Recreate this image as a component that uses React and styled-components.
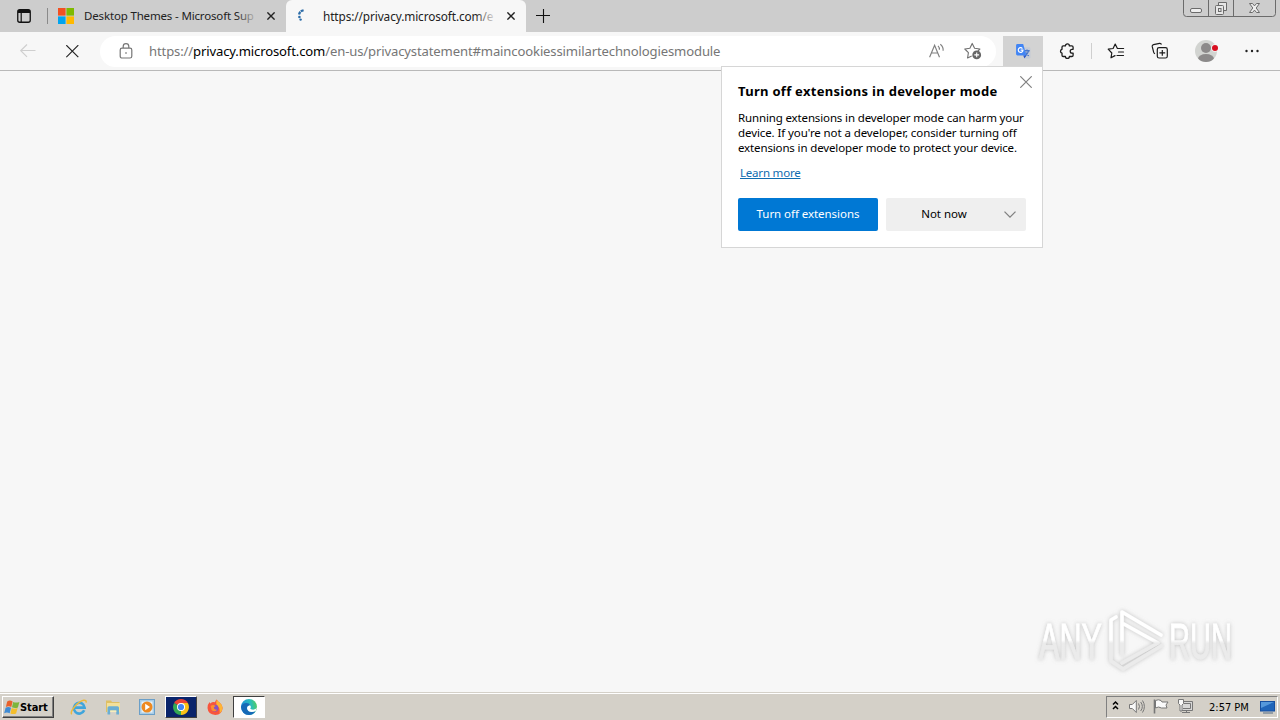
import styled, { createGlobalStyle } from "styled-components";

export default function App() {
  return (
    <Screen>
      <GlobalStyle />
      <TabStrip>
        <TabActions><PanelIcon /></TabActions>
        <Tab $width={238}>
          <MicrosoftLogo />
          <TabTitle $left={10} $fade="#cdcdcd" $size={11.5} $spacing={-0.16}>Desktop Themes - Microsoft Sup</TabTitle>
          <TabClose />
        </Tab>
        <Tab $width={240} $active>
          <Spinner />
          <TabTitle $left={11} $fade="#f7f7f7" $size={11.8} $spacing={-0.1}>https://privacy.microsoft.com/e</TabTitle>
          <TabClose />
        </Tab>
        <NewTab><PlusIcon /></NewTab>
        <WindowControls />
      </TabStrip>
      <Toolbar>
        <ToolButton $width={56}><BackIcon /></ToolButton>
        <ToolButton $width={32}><StopIcon /></ToolButton>
        <AddressBar>
          <LockIcon />
          <Url>https://<b>privacy.microsoft.com</b>/en-us/privacystatement#maincookiessimilartechnologiesmodule</Url>
          <AddressIcons>
            <ReadAloudIcon />
            <StarAddIcon />
          </AddressIcons>
        </AddressBar>
        <ToolButton $width={40} $pressed><TranslateIcon /></ToolButton>
        <ToolButton $width={48}><PuzzleIcon /></ToolButton>
        <Divider />
        <ToolButton $width={48}><FavoritesIcon /></ToolButton>
        <ToolButton $width={40}><CollectionsIcon /></ToolButton>
        <ToolButton $width={52}><Avatar /></ToolButton>
        <ToolButton $width={40}><DotsIcon /></ToolButton>
      </Toolbar>
      <Page>
        <Watermark />
      </Page>
      <Taskbar>
        <StartButton><WindowsFlag />Start</StartButton>
        <QuickLaunch>
          <TaskItem><ExplorerIcon /></TaskItem>
          <TaskItem><FolderIcon /></TaskItem>
          <TaskItem><PlayerIcon /></TaskItem>
          <TaskItem $look="selected"><ChromeIcon /></TaskItem>
          <TaskItem><FirefoxIcon /></TaskItem>
          <TaskItem $look="pressed"><EdgeIcon /></TaskItem>
        </QuickLaunch>
        <Tray>
          <TrayIcons />
          <Clock>2:57 PM</Clock>
          <MonitorIcon />
        </Tray>
      </Taskbar>
      <Popup>
        <PopupClose><CloseThin /></PopupClose>
        <PopupTitle>Turn off extensions in developer mode</PopupTitle>
        <PopupText>
          <Line $spacing={-0.14}>Running extensions in developer mode can harm your</Line>
          <Line $spacing={-0.09}>device. If you're not a developer, consider turning off</Line>
          <Line $spacing={-0.14}>extensions in developer mode to protect your device.</Line>
        </PopupText>
        <LearnMore>Learn more</LearnMore>
        <Buttons>
          <PrimaryButton>Turn off extensions</PrimaryButton>
          <SecondaryButton><span>Not now</span><Chevron /></SecondaryButton>
        </Buttons>
      </Popup>
    </Screen>
  );
}

function PanelIcon() {
  return (
    <svg width="16" height="16" viewBox="0 0 16 16">
      <rect x="1.75" y="1.75" width="12.5" height="12.5" rx="2" fill="none" stroke="#111" strokeWidth="1.3" />
      <path d="M2 2h12v3H2zM4.6 5h1.2v9H4.6z" fill="#111" />
    </svg>
  );
}

function MicrosoftLogo() {
  return (
    <svg width="16" height="16" viewBox="0 0 16 16">
      <path fill="#f25022" d="M0 0h7.6v7.6H0z" />
      <path fill="#7fba00" d="M8.4 0H16v7.6H8.4z" />
      <path fill="#00a4ef" d="M0 8.4h7.6V16H0z" />
      <path fill="#ffb900" d="M8.4 8.4H16V16H8.4z" />
    </svg>
  );
}

function TabClose() {
  return (
    <svg width="8" height="8" viewBox="0 0 8 8">
      <path d="M.4 .4l7.2 7.2M7.6 .4l-7.2 7.2" stroke="#222" strokeWidth="1.4" />
    </svg>
  );
}

function Spinner() {
  return (
    <svg width="16" height="16" viewBox="0 0 16 16">
      <path d="M7.6 2.2Q3.6 3.2 3 6.6" fill="none" stroke="#2b6ca8" strokeWidth="2.2" strokeDasharray="3 .6" />
      <circle cx="3.4" cy="9" r="1.3" fill="#2b6ca8" />
      <circle cx="4.6" cy="11.6" r="1.2" fill="#2b6ca8" />
    </svg>
  );
}

function PlusIcon() {
  return (
    <svg width="14" height="14" viewBox="0 0 14 14">
      <path d="M7.5 0v14M0 6.5h14" stroke="#111" strokeWidth="1.1" />
    </svg>
  );
}

function WindowControls() {
  return (
    <Controls>
      <svg width="94" height="18" viewBox="0 0 94 18" fill="none" stroke="#6b6b6b">
        <path d="M.5 0v13.5q0 3 3 3h86q3 0 3-3V0M25.5 0v16M50.5 0v16" />
        <rect x="7.5" y="8.5" width="11" height="4" rx="1.5" fill="#eee" />
        <path d="M35.5 5V2.5h8v8h-3" fill="#e6e6e6" />
        <rect x="32.5" y="5.5" width="8" height="9" rx="1" fill="#e6e6e6" />
        <rect x="35.5" y="8.5" width="2.5" height="3" />
        <path d="M66.5 3.5h3l2 2.4 2-2.4h3l-3.3 4.5 3.3 4.5h-3l-2-2.4-2 2.4h-3l3.3-4.5z" fill="#eee" />
      </svg>
    </Controls>
  );
}

function BackIcon() {
  return (
    <svg width="16" height="14" viewBox="0 0 16 14" fill="none" stroke="#cfcfcf" strokeWidth="1.2">
      <path d="M15.5 6.5H1M7 .5L.8 6.6 7 12.8" />
    </svg>
  );
}

function StopIcon() {
  return (
    <svg width="13" height="13" viewBox="0 0 13 13">
      <path d="M.3 .2l12 12M12.3 .2l-12 12" stroke="#222" strokeWidth="1.2" />
    </svg>
  );
}

function LockIcon() {
  return (
    <svg width="14" height="16" viewBox="0 0 14 16" fill="none" stroke="#767676" strokeWidth="1.2">
      <rect x="1.2" y="5.2" width="11.6" height="9.8" rx="1.8" />
      <path d="M4.2 5V3.4a2.8 2.8 0 0 1 5.6 0V5" />
      <path d="M6.3 9.3h1.4v1.4H6.3z" fill="#767676" stroke="none" />
    </svg>
  );
}

function ReadAloudIcon() {
  return (
    <svg width="16" height="16" viewBox="0 0 16 16" fill="none" stroke="#808080" strokeWidth="1.15">
      <path d="M.6 14.2L5.6 2.2l4.9 12M2.4 10h6.4M9 2.8q1.6 1.6 1.4 4M11.3 1.2q3.3 2.6 2.8 6.6" />
    </svg>
  );
}

function StarAddIcon() {
  return (
    <svg width="18" height="18" viewBox="0 0 18 18" fill="none" stroke="#707070" strokeWidth="1.1" strokeLinejoin="round">
      <path d="M7.7 14L3.6 16l.8-5.3L.8 7l5.1-.8L8.2 1.4l2.4 4.8 5.3.8-2 2" />
      <circle cx="12.7" cy="12.9" r="4.4" fill="#666" stroke="none" />
      <path d="M12.7 10.5v4.8M10.3 12.9h4.8" stroke="#fff" />
    </svg>
  );
}

function TranslateIcon() {
  return (
    <svg width="17" height="17" viewBox="0 0 16 16">
      <path d="M7 4h6.2q1.3 0 1.3 1.3v8.2q0 1.3-1.3 1.3H9.6z" fill="#c5cbd6" />
      <path d="M9 7.3h4.8M11.3 6v1.3M12.8 7.4q-.8 3-3.3 4.8M10 8.7q1 2 3 3.3" stroke="#4a78cc" fill="none" strokeWidth="1.2" />
      <path d="M2.3 1h5.4l3 10.7H2.3Q1 11.7 1 10.4V2.3Q1 1 2.3 1z" fill="#4285f4" />
      <path d="M7.8 11.7h3l-2 3z" fill="#2a56c6" />
      <path d="M7 5.2a2.2 2.2 0 1 0 .5 1.5H5.3" fill="none" stroke="#fff" strokeWidth="1.1" />
    </svg>
  );
}

function PuzzleIcon() {
  return (
    <svg width="16" height="16" viewBox="0 0 16 16" fill="none" stroke="#1c1c1c" strokeWidth="1.3" strokeLinejoin="round">
      <path d="M4.2 2.9h2.2a2 2 0 0 1 4 0h2.4q1.3 0 1.3 1.3v2.1h-1a1.9 1.9 0 0 0 0 3.8h1v2.1q0 1.3-1.3 1.3h-2.4a2 2 0 0 1-4 0H4.2q-1.2 0-1.2-1.3v-2.1a1.95 1.95 0 0 1 0-3.8V4.2q0-1.3 1.2-1.3z" />
    </svg>
  );
}

function FavoritesIcon() {
  return (
    <svg width="18" height="16" viewBox="0 0 18 16" fill="none" stroke="#1c1c1c" strokeWidth="1.2" strokeLinejoin="round" strokeLinecap="round">
      <path d="M8 12.6L4 14.8l.8-4.8L1.2 6.2l4.9-.7L8.2 1l2.2 4.5h6.2M11.5 9h5M10 12.5h6.5" />
    </svg>
  );
}

function CollectionsIcon() {
  return (
    <svg width="18" height="18" viewBox="0 0 18 18" fill="none" stroke="#1c1c1c" strokeWidth="1.2" strokeLinejoin="round">
      <path d="M4 11.8q-1-.4-1.3-1.4L1.2 4.4Q1 3 2.5 2.6L8.6 1.3q1.4-.2 1.9 1.2" />
      <rect x="6.3" y="5.7" width="10" height="10.3" rx="1.8" />
      <path d="M11.3 8v5.8M8.4 10.9h5.8" />
    </svg>
  );
}

function Avatar() {
  return (
    <svg width="26" height="22" viewBox="0 0 26 22">
      <clipPath id="face"><circle cx="13" cy="11" r="11" /></clipPath>
      <g clipPath="url(#face)">
        <path d="M0 0h26v22H0z" fill="#d2d4d1" />
        <circle cx="13" cy="8" r="5" fill="#8c8a8a" />
        <ellipse cx="13" cy="19" rx="8" ry="5" fill="#8c8a8a" />
      </g>
      <circle cx="22" cy="8" r="3.8" fill="#f7f7f7" />
      <circle cx="22" cy="8" r="3" fill="#d80f20" />
    </svg>
  );
}

function DotsIcon() {
  return (
    <svg width="14" height="4" viewBox="0 0 14 4" fill="#222">
      <circle cx="1.5" cy="2" r="1.2" />
      <circle cx="7" cy="2" r="1.2" />
      <circle cx="12.5" cy="2" r="1.2" />
    </svg>
  );
}

function CloseThin() {
  return (
    <svg width="12" height="12" viewBox="0 0 12 12">
      <path d="M.3 .3l11.4 11.4M11.7 .3L.3 11.7" stroke="#808080" strokeWidth="1.2" />
    </svg>
  );
}

function Chevron() {
  return (
    <svg width="12" height="7" viewBox="0 0 12 7">
      <path d="M.5 .6L6 6.1 11.5 .6" stroke="#808080" strokeWidth="1.3" fill="none" />
    </svg>
  );
}

function Watermark() {
  return (
    <Mark width="220" height="80" viewBox="0 0 220 80">
      <defs>
        <linearGradient id="fade" x1="0" y1="0" x2="0" y2="80" gradientUnits="userSpaceOnUse">
          <stop offset=".5" stopColor="#fff" />
          <stop offset=".54" stopColor="#ebebeb" />
        </linearGradient>
        <filter id="glow" x="-10%" y="-15%" width="120%" height="130%">
          <feDropShadow dx="0" dy="0" stdDeviation="2" floodColor="#888" floodOpacity=".5" />
        </filter>
      </defs>
      <g filter="url(#glow)" fill="url(#fade)" stroke="url(#fade)" strokeWidth=".8">
        <text x="14" y="59" fontSize="50" textLength="63" lengthAdjust="spacingAndGlyphs">ANY</text>
        <text x="144" y="59" fontSize="50" textLength="63" lengthAdjust="spacingAndGlyphs">RUN</text>
        <g fill="none" strokeWidth="3.6" strokeLinejoin="round" strokeLinecap="round">
          <path d="M97 54V12l39 23M97 23l36 20-36 20" />
          <path d="M91 17l-5 3v41l12 8 38-23" />
        </g>
      </g>
    </Mark>
  );
}

function WindowsFlag() {
  return (
    <svg width="16" height="15" viewBox="0 0 16 15">
      <path d="M3.2 1.4q2.7-1.6 5.4 0L7.3 6.9q-2.6-1.3-5.4 0z" fill="#e8612c" />
      <path d="M9.2 1.9q2.8 1.2 6.2 0l-1.5 5.5q-3 1.1-5.9-.2z" fill="#7db53c" />
      <path d="M1.6 7.7q2.7-1.4 5.4 0l-1.3 5.5q-2.8-1.3-5.5 0z" fill="#3f8bd4" />
      <path d="M7.7 8.1q2.8 1.2 5.9 0l-1.5 5.5q-2.9 1.1-5.7-.2z" fill="#f4be2c" />
    </svg>
  );
}

function ExplorerIcon() {
  return (
    <svg width="18" height="17" viewBox="0 0 18 17" fill="none">
      <path d="M14.2 11.3A5.4 5.4 0 1 1 14.6 8.6H5" stroke="#3fa5dc" strokeWidth="2.6" />
      <path d="M1.8 15.3C-.5 13 7 3 13.5 1.3q3-.5 2.6 2.3" stroke="#ecb93d" strokeWidth="1.5" />
    </svg>
  );
}

function FolderIcon() {
  return (
    <svg width="16" height="16" viewBox="0 0 16 16">
      <path d="M1 1.5h5l1 1.5h7.5v10H1z" fill="#dfc064" />
      <path d="M2 4h13v9H2z" fill="#f3e09a" />
      <path d="M2.5 8.8q0-1.5 1.5-1.5h8.5q1.5 0 1.5 1.5V15.5h-2.7v-4H5.2v4H2.5z" fill="#6baed3" />
      <path d="M5.2 11.5h6.1v1.6H5.2z" fill="#f7edbd" />
    </svg>
  );
}

function PlayerIcon() {
  return (
    <svg width="16" height="16" viewBox="0 0 16 16">
      <rect x=".5" y=".5" width="15" height="15" fill="#a9cde7" stroke="#6b9fc8" />
      <path d="M2.5 2.5h11v11h-11z" fill="#e9f2f8" />
      <circle cx="8" cy="8" r="5.5" fill="#ee8921" />
      <path d="M6.2 4.8L11 8l-4.8 3.2z" fill="#fff" />
    </svg>
  );
}

function ChromeIcon() {
  return (
    <svg width="16" height="16" viewBox="0 0 16 16">
      <path d="M8 8L1.1 4A8 8 0 0 1 14.9 4z" fill="#ea4335" />
      <path d="M8 8L14.9 4A8 8 0 0 1 8 16z" fill="#fbc116" />
      <path d="M8 8v8A8 8 0 0 1 1.1 4z" fill="#34a853" />
      <path d="M8 4h6.9L11.5 10z" fill="#fbc116" />
      <circle cx="8" cy="8" r="4" fill="#fff" />
      <circle cx="8" cy="8" r="3.1" fill="#4285f4" />
    </svg>
  );
}

function FirefoxIcon() {
  return (
    <svg width="16" height="16" viewBox="0 0 16 16">
      <path d="M.5 9Q.4 5.5 2.6 3l.6 1.4Q5.5 2.6 8 3.2 8.2 1.3 9.8.4q.8 2 3 3.3 2.8 2.2 2.8 5.2-.4 6.6-7.4 7Q1 15.5.5 9z" fill="#f8553c" />
      <path d="M9.8.4q.8 2 3 3.3 2.8 2.2 2.8 5.2-.3 3.6-3 5.5.6-5.4-2-7.4Q8.4 5.4 9.800 .4z" fill="#ffb534" />
      <circle cx="8" cy="9.2" r="3.4" fill="#8553c4" />
      <path d="M3.7 7Q6 5.2 8.7 7L6.8 8.3Q7 11 10.2 10.8 7.5 13.8 4.5 11z" fill="#ff8f2e" />
    </svg>
  );
}

function EdgeIcon() {
  return (
    <svg width="16" height="16" viewBox="0 0 16 16">
      <defs>
        <linearGradient id="edge" x1="0" y1=".3" x2="1" y2=".1">
          <stop offset="0" stopColor="#1d91dc" />
          <stop offset=".6" stopColor="#2bbfb9" />
          <stop offset="1" stopColor="#58ce55" />
        </linearGradient>
      </defs>
      <circle cx="8" cy="8" r="8" fill="url(#edge)" />
      <path d="M0 8q1-4 5.5-4Q8.5 4 9 6.3 6 7 6 9.3q.5 3.7 4.8 3.7 2 0 3.8-1.1Q12.2 16 8 16 1 15.7 0 8z" fill="#1669b7" />
      <path d="M9 6.3Q10.7 8 9.2 9.6q.4 1.1 2.9 1.2 2.8-.3 3.9-2.6l-1.3 3.7Q12.8 13 10.800 13 6.4 13 6 9.3 6 7 9 6.3z" fill="#fff" />
    </svg>
  );
}

function TrayIcons() {
  return (
    <svg width="84" height="18" viewBox="0 0 84 18" fill="none" stroke="#777">
      <path d="M2 6.500l2.500-2.500 2.500 2.500M2 11l2.500-2.500L7 11" stroke="#000" strokeWidth="1.5" />
      <path d="M18.500 6.500h2.800l4-4v12l-4-4h-2.800z" fill="#f8f8f8" />
      <path d="M27.500 5.500q2 3 0 6M29.700 4q3.300 4.500 0 9M31.500 2.500q3.800 6 0 12" />
      <path d="M43.500 1.500v14" strokeWidth="1.6" />
      <path d="M44.500 2.500q3-1.500 5.500 0l1 1.500h6l-2 3 1 3h-5.500q-3-2-6 0z" fill="#fafafa" />
      <path d="M71.500 3.500h10v9h-12v-5" fill="#d7d7d7" />
      <path d="M73 5.500h6.500v5H72M71 14.500h8M75.500 12.500v2" />
      <path d="M67.500 1.500h5v4l-1.500 1.500v6h-2V7l-1.500-1.500z" fill="#f8f8f8" />
    </svg>
  );
}

function MonitorIcon() {
  return (
    <svg width="15" height="15" viewBox="0 0 15 15">
      <path d="M0 1h15v10.500H0z" fill="#174f9f" />
      <path d="M1 2h13v8.500H1z" fill="#2065b9" />
      <path d="M1 2h13L1 8z" fill="#5598db" />
      <path d="M3 12.500h10v1H3z" fill="#526a84" />
    </svg>
  );
}

const GlobalStyle = createGlobalStyle`
  * {
    box-sizing: border-box;
  }
  body {
    margin: 0;
    overflow: hidden;
    font-family: "Noto Sans", "Open Sans", sans-serif;
  }
  svg {
    display: block;
    flex: none;
  }
`

const Screen = styled.div`
  position: relative;
  width: 1280px;
  height: 720px;
  display: flex;
  flex-direction: column;
  background: #f7f7f7;
`

const TabStrip = styled.div`
  height: 32px;
  display: flex;
  align-items: flex-start;
  background: #cdcdcd;
`

const TabActions = styled.div`
  width: 48px;
  height: 16px;
  margin-top: 8px;
  padding-left: 16px;
  border-right: 1px solid #8a8a8a;
`

const Tab = styled.div`
  width: ${(props) => props.$width}px;
  height: 32px;
  display: flex;
  align-items: center;
  padding: 0 11px 0 10px;
  border-radius: 6px 6px 0 0;
  background: ${(props) => (props.$active ? "#f7f7f7" : "transparent")};
`

const TabTitle = styled.div`
  position: relative;
  width: 174px;
  margin-left: ${(props) => props.$left}px;
  margin-right: auto;
  white-space: nowrap;
  font-size: ${(props) => props.$size}px;
  line-height: 18px;
  letter-spacing: ${(props) => props.$spacing}px;
  color: #222;

  &:after {
    content: "";
    position: absolute;
    top: 0;
    right: 0;
    width: 22px;
    height: 100%;
    background: linear-gradient(to right, transparent, ${(props) => props.$fade});
  }
`

const NewTab = styled.div`
  padding: 9px 0 0 10px;
`

const Controls = styled.div`
  margin-left: auto;
  margin-right: 3px;
`

const Toolbar = styled.div`
  height: 39px;
  display: flex;
  align-items: center;
  border-bottom: 1px solid #b9b9b9;
  background: #f7f7f7;
`

const ToolButton = styled.div`
  width: ${(props) => props.$width}px;
  height: 30px;
  flex: none;
  display: flex;
  align-items: center;
  justify-content: center;
  background: ${(props) => (props.$pressed ? "#d3d3d3" : "transparent")};
`

const AddressBar = styled.div`
  width: 896px;
  height: 31px;
  margin: 0 7px 0 12px;
  padding: 0 14px 0 19px;
  display: flex;
  align-items: center;
  border-radius: 16px;
  background: #fff;
`

const Url = styled.div`
  margin-left: 16px;
  white-space: nowrap;
  font-size: 13.1px;
  letter-spacing: -0.14px;
  color: #767676;

  b {
    font-weight: 400;
    color: #000;
  }
`

const AddressIcons = styled.div`
  margin-left: auto;
  display: flex;
  align-items: center;
  gap: 19px;
`

const Divider = styled.div`
  width: 1px;
  height: 16px;
  background: #cfcfcf;
`

const Page = styled.div`
  flex: 1;
  display: flex;
  align-items: flex-end;
  justify-content: flex-end;
  padding: 0 35px 12px 0;
`

const Mark = styled.svg`
  font-family: "Liberation Sans Narrow", "Liberation Sans", sans-serif;
`

const Taskbar = styled.div`
  height: 28px;
  display: flex;
  align-items: center;
  padding: 1px 2px 0;
  border-top: 1px solid #d4d0c8;
  box-shadow: inset 0 1px #fff;
  background: #d4d0c8;
`

const StartButton = styled.div`
  width: 52px;
  height: 22px;
  display: flex;
  align-items: center;
  gap: 0;
  padding-left: 1px;
  border: 1px solid;
  border-color: #fff #404040 #404040 #fff;
  box-shadow: inset -1px -1px #808080;
  font: bold 11px "DejaVu Sans Condensed", "DejaVu Sans", sans-serif;
  letter-spacing: -0.1px;
  color: #000;
`

const QuickLaunch = styled.div`
  display: flex;
  gap: 2px;
  margin-left: 9px;
`

const taskLooks = {
  selected: "background: #0a246a; border: 1px solid; border-color: #fff #404040 #404040 #fff;",
  pressed: "background: #fff; border: 1px solid; border-color: #404040 #fff #fff #404040;",
};

const TaskItem = styled.div`
  width: 32px;
  height: 22px;
  display: flex;
  align-items: center;
  justify-content: center;
  ${(props) => taskLooks[props.$look]}
`

const Tray = styled.div`
  width: 172px;
  height: 22px;
  margin-left: auto;
  display: flex;
  align-items: center;
  padding: 0 2px 0 4px;
  border: 1px solid;
  border-color: #808080 #fff #fff #808080;
`

const Clock = styled.div`
  width: 41px;
  margin: 0 10px 0 14px;
  white-space: nowrap;
  font: 11px "DejaVu Sans Condensed", "DejaVu Sans", sans-serif;
  letter-spacing: 0;
  color: #000;
`

const Popup = styled.div`
  position: absolute;
  left: 721px;
  top: 66px;
  width: 322px;
  height: 182px;
  padding: 15px 16px 0;
  border: 1px solid #d6d6d6;
  background: #fff;
  color: #000;
`

const PopupClose = styled.div`
  position: absolute;
  top: 9px;
  right: 10px;
`

const PopupTitle = styled.div`
  white-space: nowrap;
  font-size: 13px;
  line-height: 18px;
  font-weight: 700;
  letter-spacing: 0.29px;
`

const PopupText = styled.div`
  margin-top: 10px;
`

const Line = styled.div`
  white-space: nowrap;
  font-size: 11.5px;
  line-height: 15px;
  letter-spacing: ${(props) => props.$spacing}px;
`

const LearnMore = styled.a`
  display: block;
  margin: 10px 0 0 2px;
  font-size: 11.5px;
  line-height: 16px;
  letter-spacing: -0.2px;
  text-decoration: underline;
  color: #0f6cb0;
`

const Buttons = styled.div`
  display: flex;
  gap: 8px;
  margin-top: 17px;
`

const PrimaryButton = styled.div`
  width: 140px;
  height: 33px;
  border-radius: 2px;
  background: #0078d4;
  color: #fff;
  font-size: 11.5px;
  line-height: 32px;
  letter-spacing: -0.05px;
  text-align: center;
  white-space: nowrap;
`

const SecondaryButton = styled.div`
  width: 140px;
  height: 33px;
  display: flex;
  align-items: center;
  border-radius: 2px;
  background: #efefef;
  font-size: 11.5px;

  span {
    width: 118px;
    padding-right: 2px;
    line-height: 32px;
    text-align: center;
    margin-bottom: 1px;
  }
`
